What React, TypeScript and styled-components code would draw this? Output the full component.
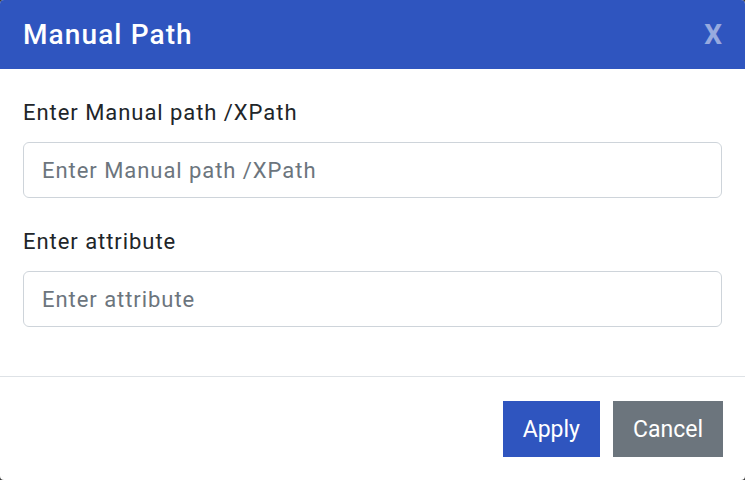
import React from "react";
import styled, { createGlobalStyle } from "styled-components";

const Global = createGlobalStyle`
  html, body { margin: 0; padding: 0; background: #3a3a3a; }
  body { font-family: Roboto, "Liberation Sans", sans-serif; }
  * { box-sizing: border-box; }
`;

const Modal = styled.div`
  width: 745px;
  height: 480px;
  background: #ffffff;
  border-radius: 4px;
  overflow: hidden;
  display: flex;
  flex-direction: column;
`;

const Header = styled.div`
  height: 69px;
  flex: none;
  background: #2f55bf;
  display: flex;
  align-items: center;
  justify-content: space-between;
  padding: 0 23px 0 23px;
`;

const Title = styled.h2`
  margin: 0;
  color: #ffffff;
  font-size: 28px;
  font-weight: 500;
  letter-spacing: 1.1px;
  line-height: 1;
`;

const Close = styled.button`
  border: 0;
  background: transparent;
  padding: 0;
  color: rgba(255, 255, 255, 0.5);
  font-family: Roboto, sans-serif;
  font-size: 28px;
  font-weight: 700;
  line-height: 1;
  cursor: pointer;
`;

const Body = styled.div`
  flex: 1;
  padding: 29px 23px 20px;
`;

const Group = styled.div`
  margin-bottom: 29px;
`;

const Label = styled.label`
  display: block;
  color: #212529;
  font-size: 22px;
  letter-spacing: 0.95px;
  line-height: 30px;
  margin-bottom: 14px;
`;

const Input = styled.input`
  display: block;
  width: 100%;
  height: 56px;
  padding: 0 18px;
  border: 1px solid #ced4da;
  border-radius: 6px;
  font-family: Roboto, sans-serif;
  font-size: 22px;
  letter-spacing: 0.95px;
  color: #495057;
  outline: none;
  &::placeholder { color: #6c757d; }
`;

const Footer = styled.div`
  flex: none;
  border-top: 1px solid #dee2e6;
  padding: 24px 22px 23px;
  display: flex;
  justify-content: flex-end;
  gap: 13px;
`;

const Button = styled.button<{ $variant: "primary" | "secondary" }>`
  height: 56px;
  padding: 0 20px;
  border: 0;
  border-radius: 0;
  font-family: Roboto, sans-serif;
  font-size: 23px;
  color: #ffffff;
  background: ${(p) => (p.$variant === "primary" ? "#2f55bf" : "#6c757d")};
  cursor: pointer;
`;

export default function App() {
  return (
    <>
      <Global />
      <Modal>
        <Header>
          <Title>Manual Path</Title>
          <Close>X</Close>
        </Header>
        <Body>
          <Group>
            <Label>Enter Manual path /XPath</Label>
            <Input placeholder="Enter Manual path /XPath" />
          </Group>
          <Group>
            <Label>Enter attribute</Label>
            <Input placeholder="Enter attribute" />
          </Group>
        </Body>
        <Footer>
          <Button $variant="primary">Apply</Button>
          <Button $variant="secondary">Cancel</Button>
        </Footer>
      </Modal>
    </>
  );
}
